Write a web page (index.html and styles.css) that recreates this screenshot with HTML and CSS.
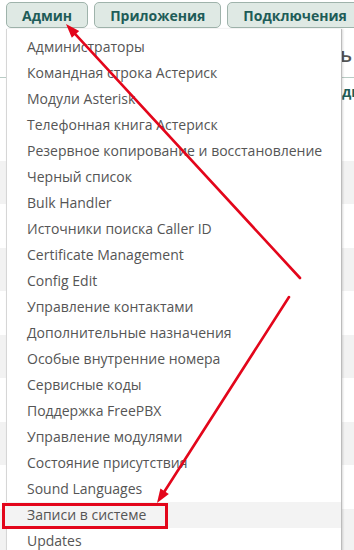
FILE: index.html
```html
<!DOCTYPE html>
<html lang="ru">

<head>
    <meta charset="UTF-8">
    <title>FreePBX - Админ</title>
    <link rel="stylesheet" href="styles.css">
</head>

<body>
    <div class="nav">
        <button class="tab">Админ</button>
        <button class="tab">Приложения</button>
        <button class="tab">Подключения</button>
    </div>

    <div class="content">
        <div class="title"><span>Журнал пользователь</span></div>
        <div class="thead">диапазон</div>
        <div class="row"></div>
        <div class="row grey"></div>
        <div class="row"></div>
        <div class="row grey"></div>
        <div class="row"></div>
        <div class="row grey"></div>
        <div class="row"></div>
        <div class="row grey"></div>
        <div class="row"></div>
        <div class="row grey"></div>
    </div>

    <ul class="menu">
        <li>Администраторы</li>
        <li>Командная строка Астериск</li>
        <li>Модули Asterisk</li>
        <li>Телефонная книга Астериск</li>
        <li>Резервное копирование и восстановление</li>
        <li>Черный список</li>
        <li>Bulk Handler</li>
        <li>Источники поиска Caller ID</li>
        <li>Certificate Management</li>
        <li>Config Edit</li>
        <li>Управление контактами</li>
        <li>Дополнительные назначения</li>
        <li>Особые внутренние номера</li>
        <li>Сервисные коды</li>
        <li>Поддержка FreePBX</li>
        <li>Управление модулями</li>
        <li>Состояние присутствия</li>
        <li>Sound Languages</li>
        <li class="active">Записи в системе</li>
        <li>Updates</li>
    </ul>

    <!-- annotation on top of the screenshot -->
    <svg class="marks" width="354" height="550" viewBox="0 0 354 550">
        <line x1="300" y1="278" x2="75.5" y2="34.3" stroke="#e3061b" stroke-width="2.6" stroke-linecap="round" />
        <polygon points="66,24 79.2,30.9 71.8,37.7" fill="#e3061b" />
        <line x1="289" y1="297" x2="164.6" y2="491.2" stroke="#e3061b" stroke-width="2.6" stroke-linecap="round" />
        <polygon points="157,503 168.8,493.9 160.4,488.5" fill="#e3061b" />
        <rect x="3.5" y="504.5" width="163" height="23" fill="none" stroke="#e3061b" stroke-width="3" />
    </svg>
</body>

</html>
```

FILE: styles.css
```css
* {
    margin: 0;
    padding: 0;
    box-sizing: border-box;
}

html,
body {
    width: 354px;
    height: 550px;
    overflow: hidden;
}

body {
    position: relative;
    font-family: "Open Sans", "DejaVu Sans", sans-serif;
    background: #fff;
}

.nav {
    display: flex;
    gap: 6px;
    padding: 2px 0 0 6px;
    height: 29px;
    white-space: nowrap;
}

.tab {
    flex: none;
    height: 26px;
    padding: 0 15px;
    border: 1px solid #9fb3ab;
    border-radius: 5px;
    background: #dfe9e4;
    color: #1e5c58;
    font-family: "Open Sans", sans-serif;
    font-weight: 700;
    font-size: 14px;
}

.content {
    width: 354px;
}

.title {
    display: flex;
    justify-content: flex-end;
    height: 49px;
    padding: 12px 2px 0 0;
    border-bottom: 1px solid #b9ccc5;
    white-space: nowrap;
    overflow: hidden;
    font-size: 20px;
    font-weight: 600;
    color: #555;
}

.thead {
    height: 39px;
    padding: 4px 0 0 342px;
    white-space: nowrap;
    font-size: 14px;
    font-weight: 700;
    color: #1e5c58;
}

.row {
    height: 43.5px;
}

.row.grey {
    background: #f2f2f2;
}

.menu {
    position: absolute;
    left: 6px;
    top: 29px;
    width: 336px;
    padding-top: 5px;
    list-style: none;
    background: #fff;
    border-left: 1px solid #d6d6d6;
    border-right: 1px solid #bcbcbc;
    box-shadow: 1px 0 2px rgba(0, 0, 0, 0.15);
}

.menu li {
    height: 26px;
    line-height: 26px;
    padding-left: 20px;
    font-size: 14px;
    color: #555;
    white-space: nowrap;
}

.menu li.active {
    background: #f3f3f3;
    margin-left: -4px;
    padding-left: 24px;
}

.marks {
    position: absolute;
    left: 0;
    top: 0;
}
```
